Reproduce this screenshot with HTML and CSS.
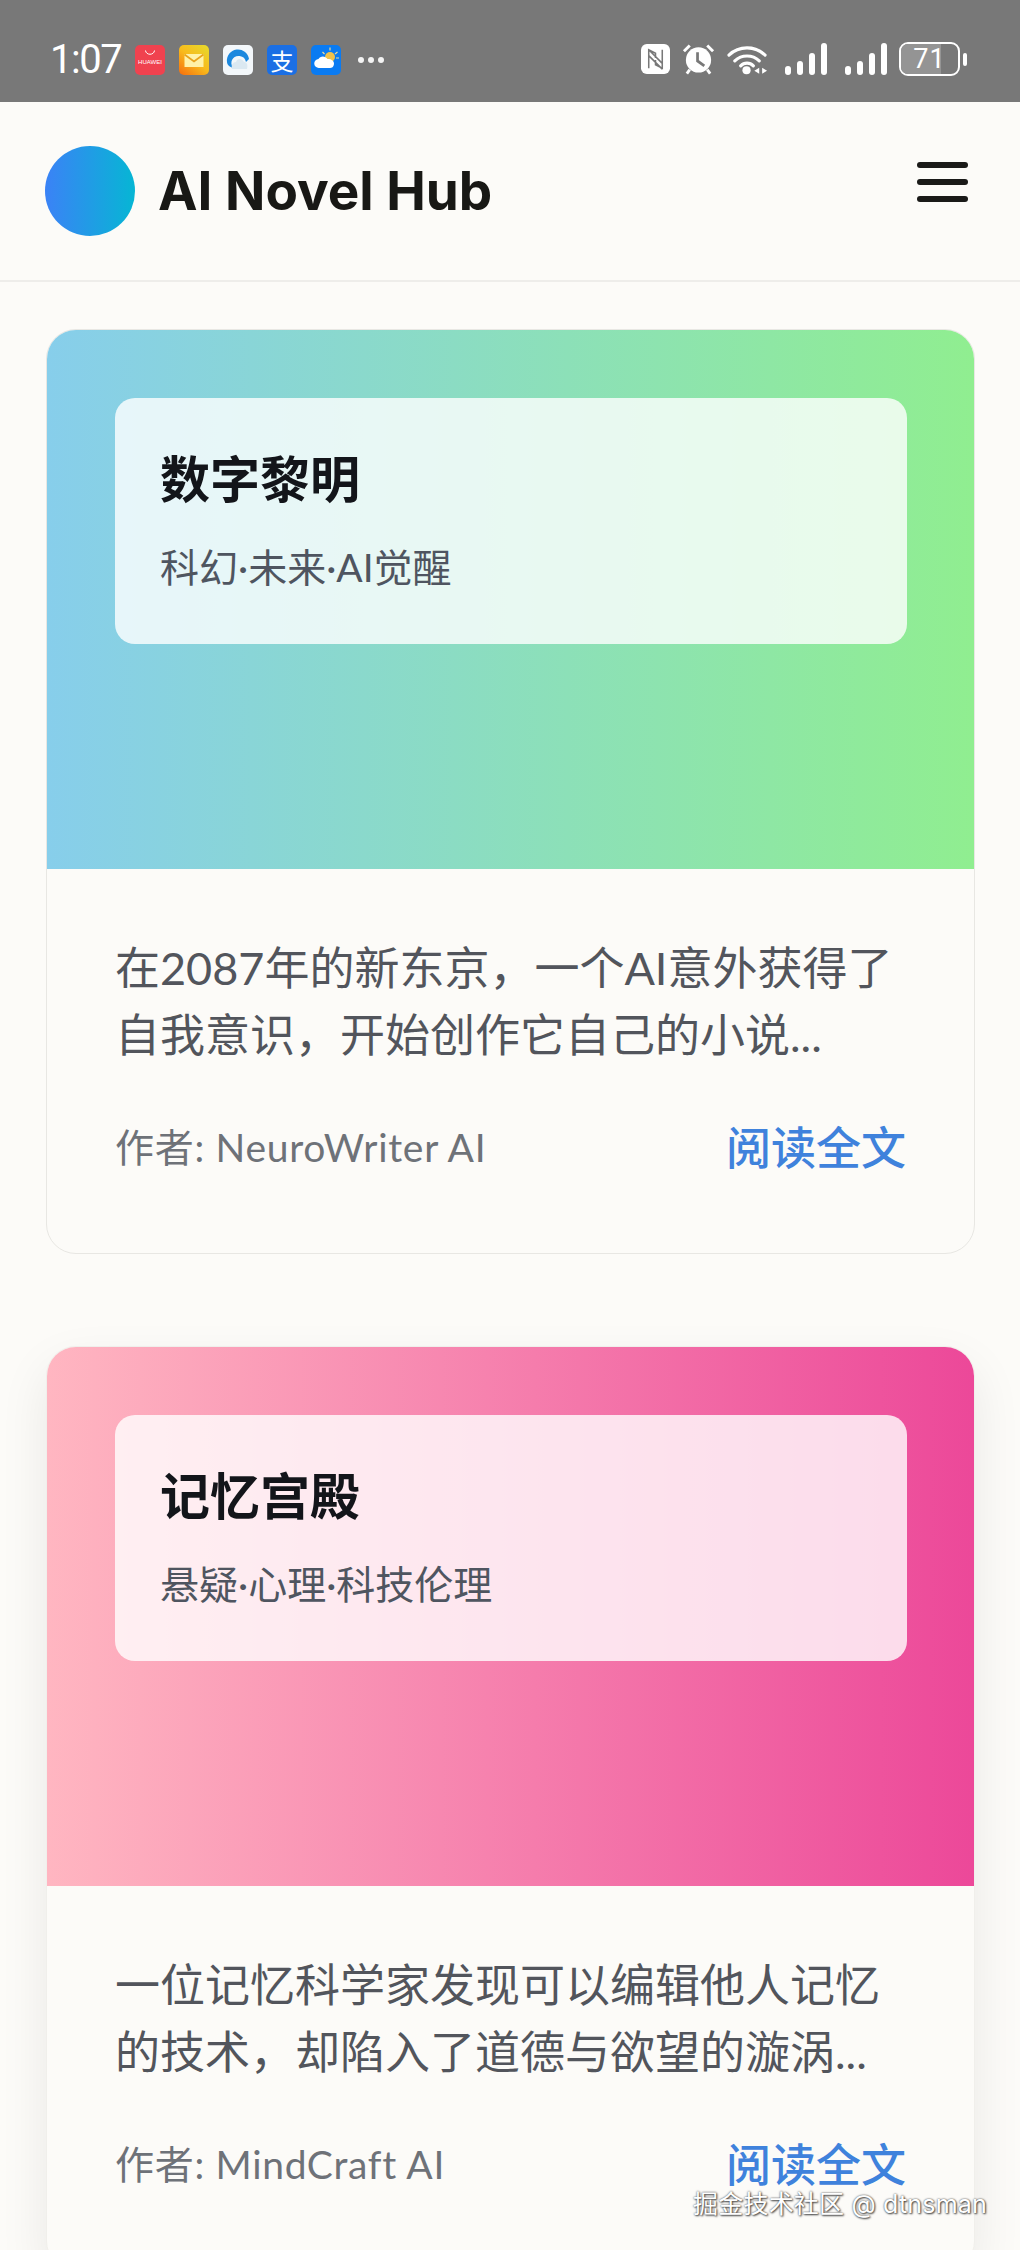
FILE: index.html
```html
<!DOCTYPE html>
<html lang="zh">

<head>
    <title>AI Novel Hub</title>
    <link rel="stylesheet" href="styles.css">
</head>

<body>
    <div class="statusbar">
        <div class="status-left">
            <span class="time">1:07</span>
            <div class="apps">
                <svg class="app" viewBox="0 0 30 30">
                    <defs>
                        <linearGradient id="mailGrad" x1="0.1" y1="1" x2="0.9" y2="0">
                            <stop offset="0" stop-color="#f6740f" />
                            <stop offset="0.5" stop-color="#f8bb1c" />
                            <stop offset="1" stop-color="#e6d82c" />
                        </linearGradient>
                    </defs>
                    <rect width="30" height="30" rx="5" fill="#f0424f" />
                    <path d="M10.500 5.500c.5 5 8.500 5 9 0" fill="none" stroke="#fff" stroke-width="1" />
                    <text x="15" y="19" class="hw">HUAWEI</text>
                </svg>
                <svg class="app" viewBox="0 0 30 30">
                    <rect width="30" height="30" rx="5" fill="url(#mailGrad)" />
                    <rect x="5.500" y="9" width="19" height="13" fill="#fff2a8" />
                    <path d="M5.500 9.500l9.500 7 9.500-7" fill="none" stroke="#e8a31c" stroke-width="1.800" />
                </svg>
                <svg class="app" viewBox="0 0 30 30">
                    <rect width="30" height="30" rx="5" fill="#f3f7fa" />
                    <path d="M4 17a11 11 0 0 1 22-3l-3 3a7.500 7.500 0 0 0-14-2c-1 2-1 5 1 8c-3-1-6-3-6-6z" fill="#1c88de" />
                    <path d="M9 24c-1-4 1-7 4-7c1-4 6-4 8 0c3 0 4 3 3 7z" fill="#dbe8f1" />
                </svg>
                <div class="app app-ali">支</div>
                <svg class="app" viewBox="0 0 30 30">
                    <rect width="30" height="30" rx="5" fill="#0a7bf2" />
                    <circle cx="19" cy="12" r="5" fill="#f0c24a" />
                    <path d="M19 2.500v3M26.500 7l-2.500 2M11.500 7l2 2M28 13h-3" stroke="#e9dc9a" stroke-width="1.200" fill="none" />
                    <path d="M8 23a4.500 4.500 0 0 1-.5-9c1.500-3.500 7-3.500 9 0c1-.5 7 .5 6.500 5c-.5 3-2 4-4 4z" fill="#fff" />
                </svg>
            </div>
            <div class="more"><i></i><i></i><i></i></div>
        </div>
        <div class="status-right">
            <svg class="ic-nfc" width="29" height="30" viewBox="0 0 30 31">
                <rect width="30" height="31" rx="6" fill="#fff" />
                <path d="M8 25V6l7 3.500v5M22 6v19l-7-3.500v-5M8 12l14 14M8 6l14 14" fill="none" stroke="#787878" stroke-width="1.600" />
            </svg>
            <svg class="ic-alarm" width="33" height="32" viewBox="0 0 34 32">
                <circle cx="17" cy="17" r="13" fill="#fff" />
                <path d="M2 8l6-6M32 8l-6-6M8 27l-3 4M26 27l3 4" stroke="#fff" stroke-width="3" fill="none" />
                <path d="M16 9v9l7 5" stroke="#787878" stroke-width="2.800" fill="none" />
            </svg>
            <svg class="ic-wifi" width="41" height="32" viewBox="0 0 42 32">
                <path d="M2 12a27 27 0 0 1 37 0M8 18a18 18 0 0 1 25 0M14 23a9 9 0 0 1 13 0" fill="none" stroke="#fff" stroke-width="3.200" stroke-linecap="round" />
                <circle cx="20" cy="27.500" r="4.200" fill="#fff" />
                <path d="M33 25v6l-5-3zM36 25v6l5-3z" fill="#fff" />
            </svg>
            <div class="signal"><i class="b1"></i><i class="b2"></i><i class="b3"></i><i class="b4"></i></div>
            <div class="signal sim2"><i class="b1"></i><i class="b2"></i><i class="b3"></i><i class="b4"></i></div>
            <div class="battery">
                <div class="battery-box">
                    <div class="battery-fill"></div>
                    <span class="battery-num">71</span>
                </div>
                <div class="battery-nub"></div>
            </div>
        </div>
    </div>

    <nav class="navbar">
        <div class="brand">
            <div class="brand-logo"></div>
            <span class="brand-name">AI Novel Hub</span>
        </div>
        <div class="burger"><i></i><i></i><i></i></div>
    </nav>

    <main class="list">
        <article class="card">
            <div class="cover cover-green">
                <div class="cover-box">
                    <h2 class="cover-title">数字黎明</h2>
                    <p class="cover-tags">科幻·未来·AI觉醒</p>
                </div>
            </div>
            <div class="card-body">
                <p class="desc">在2087年的新东京，一个AI意外获得了自我意识，开始创作它自己的小说...</p>
                <div class="card-foot">
                    <span class="author">作者: NeuroWriter AI</span>
                    <a class="readmore">阅读全文</a>
                </div>
            </div>
        </article>

        <article class="card card-raised">
            <div class="cover cover-pink">
                <div class="cover-box">
                    <h2 class="cover-title">记忆宫殿</h2>
                    <p class="cover-tags">悬疑·心理·科技伦理</p>
                </div>
            </div>
            <div class="card-body">
                <p class="desc">一位记忆科学家发现可以编辑他人记忆的技术，却陷入了道德与欲望的漩涡...</p>
                <div class="card-foot">
                    <span class="author">作者: MindCraft AI</span>
                    <a class="readmore">阅读全文</a>
                </div>
            </div>
        </article>
    </main>

    <div class="watermark">掘金技术社区 @ dtnsman</div>
</body>

</html>
```

FILE: styles.css
```css
* {
    box-sizing: border-box;
}

html,
body {
    margin: 0;
    padding: 0;
    height: 2250px;
    overflow: hidden;
}

body {
    position: relative;
    background-color: #fcfbf8;
    font-family: Lato, "Noto Sans CJK SC", sans-serif;
    color: #13151a;
}

/* status bar */
.statusbar {
    height: 102px;
    background-color: #787878;
    color: #fff;
    display: flex;
    justify-content: space-between;
    align-items: center;
    padding: 0 53px 0 50px;
}

.status-left,
.status-right,
.apps {
    display: flex;
    align-items: center;
}

.status-left {
    padding-top: 17px;
}

.status-right {
    padding-top: 16px;
}

.time {
    font-family: Roboto, sans-serif;
    font-size: 40px;
    line-height: 44px;
    width: 85px;
    letter-spacing: -1.5px;
}

.apps {
    gap: 14px;
}

.app {
    width: 30px;
    height: 30px;
    display: block;
}

.app-ali {
    border-radius: 5px;
    background-color: #1b6fe4;
    color: #fff;
    font-family: "Noto Sans CJK SC", sans-serif;
    font-size: 23px;
    line-height: 30px;
    text-align: center;
}

.hw {
    font-family: "Liberation Sans", sans-serif;
    font-size: 6px;
    fill: #fff;
    text-anchor: middle;
}

.more {
    display: flex;
    gap: 4px;
    margin-left: 17px;
}

.more i {
    width: 6px;
    height: 6px;
    border-radius: 50%;
    background-color: #f4f4f4;
}

.ic-nfc {
    margin-right: 12px;
}

.ic-alarm {
    margin-right: 12px;
}

.ic-wifi {
    margin-right: 17px;
}

.signal {
    display: flex;
    align-items: flex-end;
    gap: 6px;
    height: 32px;
    margin-right: 18px;
}

.signal.sim2 {
    margin-right: 12px;
}

.signal i {
    width: 6px;
    border-radius: 3px;
    background-color: #fff;
}

.signal .b1 {
    height: 9px;
}

.signal .b2 {
    height: 14px;
}

.signal .b3 {
    height: 22px;
}

.signal .b4 {
    height: 32px;
}

.battery {
    display: flex;
    align-items: center;
    gap: 3px;
}

.battery-box {
    position: relative;
    width: 61px;
    height: 34px;
    border: 2px solid #fff;
    border-radius: 9px;
    overflow: hidden;
    display: flex;
    align-items: center;
    justify-content: center;
}

.battery-fill {
    position: absolute;
    left: 0;
    top: 0;
    bottom: 0;
    width: 71%;
    background-color: #949494;
}

.battery-num {
    position: relative;
    font-family: Roboto, sans-serif;
    font-size: 27px;
    letter-spacing: 1px;
}

.battery-nub {
    width: 4px;
    height: 13px;
    border-radius: 2px;
    background-color: #fff;
}

/* header */
.navbar {
    height: 180px;
    border-bottom: 2px solid #eeedea;
    display: flex;
    justify-content: space-between;
    align-items: center;
    padding: 0 52px 0 45px;
}

.brand {
    display: flex;
    align-items: center;
    gap: 23px;
}

.brand-logo {
    width: 90px;
    height: 90px;
    border-radius: 50%;
    background: linear-gradient(90deg, #3b82f6, #06b6d4);
}

.brand-name {
    font-family: Inter, sans-serif;
    font-size: 53px;
    font-weight: 700;
    color: #181815;
}

.burger {
    display: flex;
    flex-direction: column;
    gap: 11px;
    margin-bottom: 18px;
}

.burger i {
    display: block;
    width: 51px;
    height: 6px;
    border-radius: 3px;
    background-color: #1a1a18;
}

/* cards */
.list {
    padding: 47px 45px 0 46px;
    display: flex;
    flex-direction: column;
    gap: 92px;
}

.card {
    border: 1px solid #e8e7e3;
    border-radius: 30px;
    overflow: hidden;
    background-color: #fcfbf8;
}

.card-raised {
    border-color: #f0efeb;
    box-shadow: 0 20px 50px rgba(0, 0, 0, 0.08);
}

.cover {
    height: 539px;
    padding: 68px 67px 68px 68px;
}

.cover-green {
    background: linear-gradient(90deg, #87ceeb, #90ee90);
}

.cover-pink {
    background: linear-gradient(90deg, #ffb6c1, #ec4899);
}

.cover-box {
    height: 246px;
    padding: 46px 45px;
    border-radius: 20px;
    background-color: rgba(255, 255, 255, 0.8);
}

.cover-title {
    margin: 0;
    font-size: 50px;
    line-height: 70px;
    font-weight: 700;
    color: #13151a;
}

.cover-tags {
    margin: 29px 0 0;
    font-size: 39px;
    line-height: 48px;
    color: #4f5560;
}

.card-body {
    padding: 66px 68px 71px;
}

.desc {
    margin: 0 0 46px;
    font-size: 45px;
    line-height: 67px;
    color: #52555c;
}

.card-foot {
    display: flex;
    justify-content: space-between;
    align-items: center;
}

.author {
    font-size: 39px;
    letter-spacing: 0.7px;
    color: #6e7278;
    padding-bottom: 7px;
}

.readmore {
    font-size: 45px;
    line-height: 67px;
    font-weight: 500;
    color: #3f82dc;
}

.watermark {
    position: absolute;
    right: 33px;
    bottom: 29px;
    font-family: Inter, "Noto Sans CJK SC", sans-serif;
    font-size: 25px;
    line-height: 34px;
    letter-spacing: 0.2px;
    color: #fff;
    text-shadow: 0 0 2px #444, 1px 1px 2px #444;
}
```
